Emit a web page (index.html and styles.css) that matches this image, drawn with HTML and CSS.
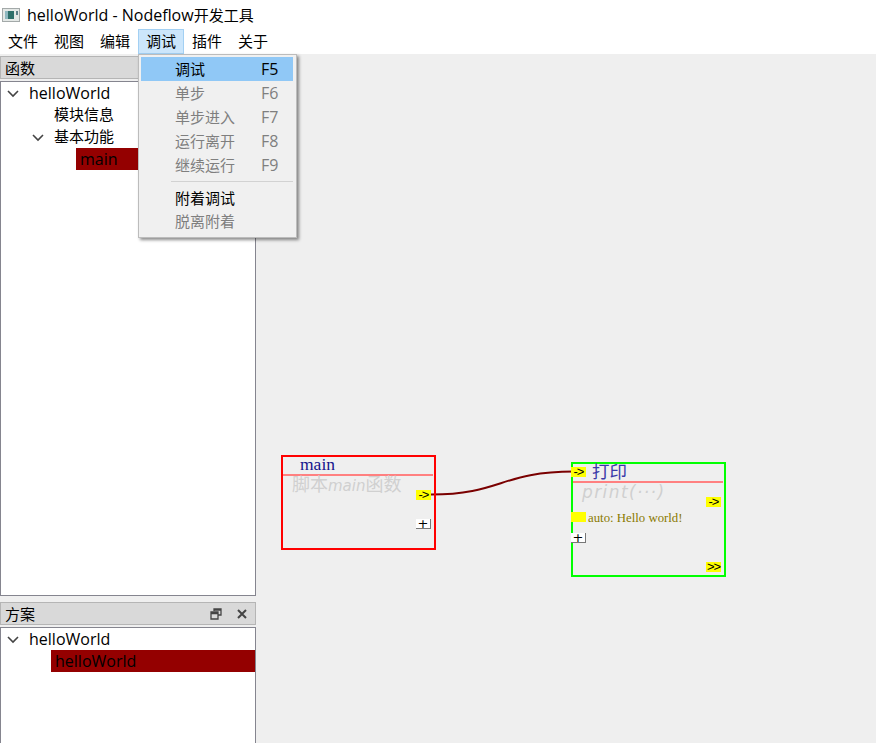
FILE: index.html
```html
<!DOCTYPE html>
<html lang="zh">
<head>
<meta charset="utf-8">
<title>helloWorld - Nodeflow开发工具</title>
<link rel="stylesheet" href="styles.css">
</head>
<body>
<div class="titlebar">
  <svg class="appicon" width="18" height="14" viewBox="0 0 18 14">
    <rect x="0.5" y="0.5" width="17" height="13" fill="#e4e8e6" stroke="#a3a9a9"/>
    <rect x="3" y="3" width="9" height="8" fill="#2f6f6a"/>
    <rect x="3" y="3" width="3" height="8" fill="#8fb8c0"/>
    <rect x="14" y="3" width="2" height="4" fill="#5c7f88"/>
  </svg>
  <span><span class="en">helloWorld - Nodeflow</span>开发工具</span>
</div>
<div class="menubar">
  <span class="menuitem">文件</span>
  <span class="menuitem">视图</span>
  <span class="menuitem">编辑</span>
  <span class="menuitem open">调试</span>
  <span class="menuitem">插件</span>
  <span class="menuitem">关于</span>
</div>
<div class="main">
  <div class="side">
    <div class="dock dock-top">
      <div class="dockhead"><span>函数</span></div>
      <div class="tree">
        <div class="row"><svg class="arrow" width="14" height="8" viewBox="0 0 14 8"><path d="M2 1l5 5 5-5" fill="none" stroke="#444" stroke-width="1.6"/></svg><span class="en">helloWorld</span></div>
        <div class="row lv1"><span>模块信息</span></div>
        <div class="row lv1"><svg class="arrow" width="14" height="8" viewBox="0 0 14 8"><path d="M2 1l5 5 5-5" fill="none" stroke="#444" stroke-width="1.6"/></svg><span>基本功能</span></div>
        <div class="row lv2 selected"><span class="en">main</span></div>
      </div>
    </div>
    <div class="dock dock-bottom">
      <div class="dockhead">
        <span>方案</span>
        <span class="dockbtns">
          <svg width="12" height="12" viewBox="0 0 12 12"><path d="M4 3V1h7v6H8.500M1 4h7v7H1z M1 5.500h7M4 2h7" fill="none" stroke="#444" stroke-width="1.300"/></svg>
          <svg width="12" height="12" viewBox="0 0 12 12"><path d="M2 2l8 8M10 2l-8 8" fill="none" stroke="#444" stroke-width="2"/></svg>
        </span>
      </div>
      <div class="tree">
        <div class="row"><svg class="arrow" width="14" height="8" viewBox="0 0 14 8"><path d="M2 1l5 5 5-5" fill="none" stroke="#444" stroke-width="1.6"/></svg><span class="en">helloWorld</span></div>
        <div class="row lv1b selected"><span class="en">helloWorld</span></div>
      </div>
    </div>
  </div>
  <div class="canvas">
    <svg class="wires" width="620" height="689" viewBox="0 0 620 689">
      <path d="M175 440.500 C245 440.500 245 417.500 318 417.500" fill="none" stroke="#7a0000" stroke-width="2"/>
    </svg>

    <div class="node node-red">
      <div class="nodetitle title-main">main</div>
      <div class="nodesub sub-main">脚本<i>main</i>函数</div>
      <div class="pin pin-out1">-&gt;</div>
      <div class="addbtn add-main">+</div>
    </div>

    <div class="node node-green">
      <div class="nodetitle title-print">打印</div>
      <div class="nodesub sub-print"><i class="wide">print(···)</i></div>
      <div class="pin pin-in">-&gt;</div>
      <div class="pin pin-out2">-&gt;</div>
      <div class="pin pin-auto"></div>
      <div class="autotext">auto: Hello world!</div>
      <div class="addbtn add-print">+</div>
      <div class="pin pin-next">&gt;&gt;</div>
    </div>
  </div>
</div>

<div class="menu">
  <div class="menurow active"><span>调试</span><span class="key en">F5</span></div>
  <div class="menurow off"><span>单步</span><span class="key en">F6</span></div>
  <div class="menurow off"><span>单步进入</span><span class="key en">F7</span></div>
  <div class="menurow off"><span>运行离开</span><span class="key en">F8</span></div>
  <div class="menurow off"><span>继续运行</span><span class="key en">F9</span></div>
  <div class="menusep"></div>
  <div class="menurow"><span>附着调试</span></div>
  <div class="menurow off last"><span>脱离附着</span></div>
</div>
</body>
</html>
```
FILE: styles.css
```css
html, body {
  margin: 0;
  padding: 0;
  height: 743px;
  overflow: hidden;
}
body {
  background: #fff;
  color: #000;
  font: 15px "Open Sans", "Noto Sans CJK SC", sans-serif;
}
.en {
  font-size: 16px;
}
.titlebar {
  height: 29px;
  display: flex;
  align-items: center;
  gap: 7px;
  padding-left: 2px;
  box-sizing: border-box;
}
.menubar {
  height: 25px;
  display: flex;
}
.menuitem {
  width: 46px;
  line-height: 25px;
  text-align: center;
  box-sizing: border-box;
}
.menuitem.open {
  background: #cce6fb;
  border: 1px solid #a3d0f3;
  line-height: 23px;
}
.main {
  display: flex;
  height: 689px;
  background: #efefef;
}
.side {
  width: 256px;
  flex: none;
  display: flex;
  flex-direction: column;
  padding-top: 2px;
  box-sizing: border-box;
}
.dock-top {
  height: 540px;
  margin-bottom: 6px;
  display: flex;
  flex-direction: column;
}
.dock-bottom {
  flex: 1;
  display: flex;
  flex-direction: column;
}
.dockhead {
  height: 23px;
  flex: none;
  background: #d9d9d9;
  border: 1px solid #b5b5b5;
  box-sizing: border-box;
  display: flex;
  align-items: center;
  justify-content: space-between;
  padding: 0 7px 0 4px;
  margin-bottom: 2px;
}
.dockbtns {
  display: flex;
  gap: 14px;
}
.tree {
  flex: 1;
  background: #fff;
  border: 1px solid #85858f;
}
.dock-bottom .tree {
  border-bottom: none;
}
.row {
  height: 22px;
  line-height: 22px;
  padding-left: 28px;
  position: relative;
  white-space: nowrap;
}
.arrow {
  position: absolute;
  left: 5px;
  top: 8px;
}
.lv1 {
  padding-left: 53px;
  line-height: 20px;
}
.lv1 .arrow { left: 30px; }
.lv2 {
  margin-left: 75px;
  padding-left: 4px;
}
.lv1b {
  margin-left: 50px;
  padding-left: 4px;
}
.selected {
  background: #940000;
}
.canvas {
  flex: 1;
  position: relative;
}
.wires {
  position: absolute;
  left: 0;
  top: 0;
}
.node {
  position: absolute;
  width: 155px;
  box-sizing: border-box;
  font-family: "Liberation Serif", "Noto Sans CJK SC", serif;
}
.node-red {
  left: 25px;
  top: 401px;
  height: 95px;
  border: 2px solid #ff0000;
}
.node-green {
  left: 315px;
  top: 408px;
  height: 115px;
  border: 2px solid #00ff00;
}
.nodetitle {
  height: 17px;
  border-bottom: 2px solid #ff8080;
  color: #14148c;
  font-size: 17.500px;
  line-height: 14px;
  margin-right: 1px;
  white-space: nowrap;
}
.title-main { padding-left: 17px; }
.title-print {
  padding-left: 19px;
  font-family: "Noto Sans CJK SC", sans-serif;
  color: #3a3aa8;
}
.nodesub {
  color: #d0d0d0;
  font-size: 18px;
  line-height: 20px;
  white-space: nowrap;
  padding-left: 9px;
  margin-top: -1px;
}
.nodesub i {
  font-family: "DejaVu Sans", sans-serif;
  font-size: 15px;
}
.nodesub i.wide {
  font-size: 17px;
  letter-spacing: 1.400px;
}
.pin {
  position: absolute;
  width: 15px;
  height: 10px;
  background: #ffff00;
  font: 13px/9px "Liberation Sans", sans-serif;
  letter-spacing: -1px;
  text-align: center;
  color: #000;
}
.pin-out1 { right: 3px; top: 33px; }
.pin-in { left: -2px; top: 3px; }
.pin-out2 { right: 3px; top: 33px; }
.pin-auto { left: -2px; top: 48px; }
.pin-next { right: 3px; top: 98px; }
.autotext {
  position: absolute;
  left: 15px;
  top: 47px;
  color: #8a7a00;
  font-size: 12.800px;
  line-height: 14px;
  white-space: nowrap;
}
.addbtn {
  position: absolute;
  width: 15px;
  height: 10px;
  background: #fff;
  border-right: 1px solid #777;
  border-bottom: 1px solid #777;
  box-sizing: border-box;
  font: 13px/9px "DejaVu Sans", sans-serif;
  text-align: center;
}
.add-main { right: 3px; top: 62px; }
.add-print { left: -2px; top: 69px; }
.menu {
  position: absolute;
  left: 138px;
  top: 54px;
  width: 159px;
  height: 184px;
  box-sizing: border-box;
  background: #f0f0f0;
  border: 1px solid #bcbcbc;
  box-shadow: 2px 2px 3px rgba(0, 0, 0, 0.45);
  padding: 2px 3px 2px 2px;
}
.menurow {
  height: 24px;
  line-height: 24px;
  padding-left: 34px;
  display: flex;
  position: relative;
}
.menurow.active { background: #90c8f6; }
.menurow.off { color: #7f7f7f; }
.menurow.last { margin-top: -1px; }
.key {
  position: absolute;
  left: 120px;
}
.menusep {
  height: 1px;
  background: #d2d2d2;
  margin: 4px 0 4px 30px;
}
```
